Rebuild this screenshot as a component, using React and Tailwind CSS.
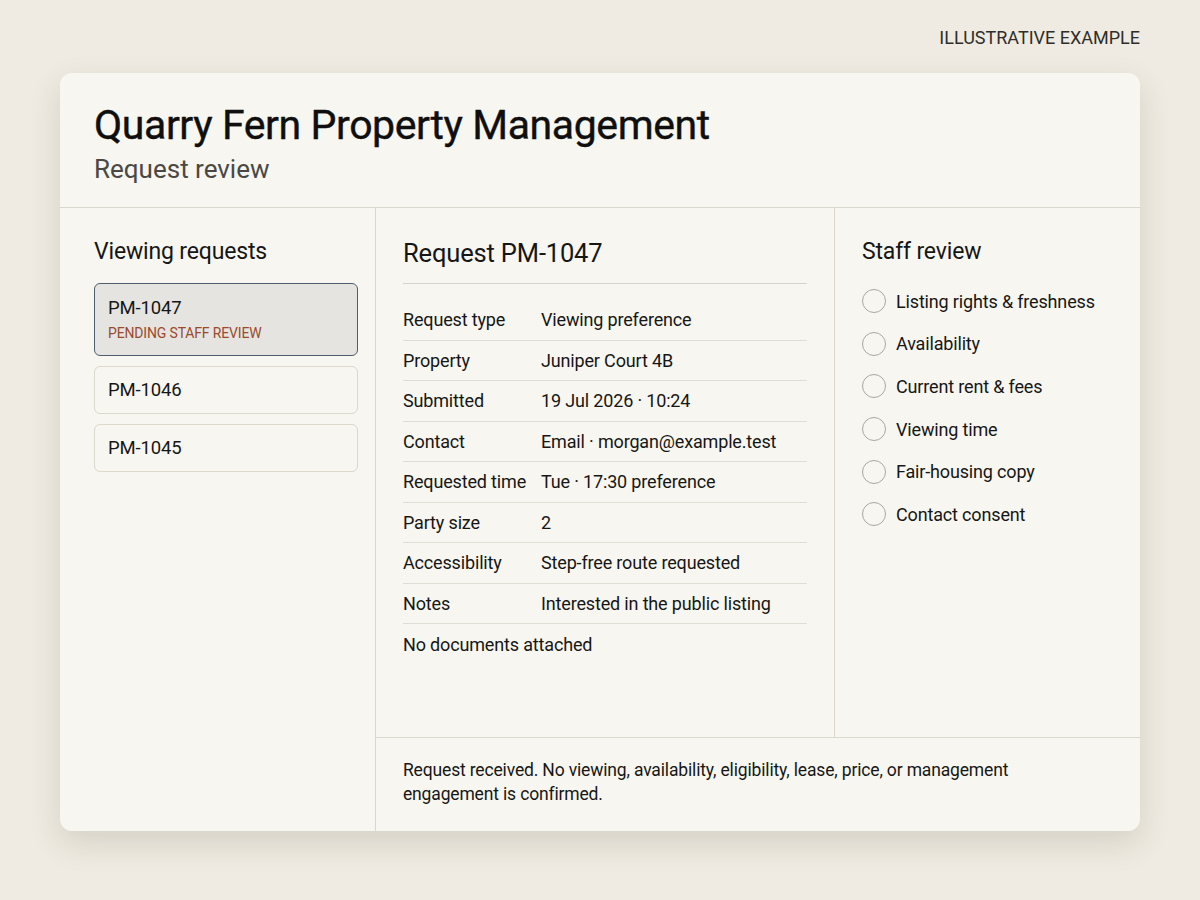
import React from 'react';

const requests = [
  { id: 'PM-1047', status: 'PENDING STAFF REVIEW', active: true },
  { id: 'PM-1046' },
  { id: 'PM-1045' },
];

const details = [
  ['Request type', 'Viewing preference'],
  ['Property', 'Juniper Court 4B'],
  ['Submitted', '19 Jul 2026 · 10:24'],
  ['Contact', 'Email · morgan@example.test'],
  ['Requested time', 'Tue · 17:30 preference'],
  ['Party size', '2'],
  ['Accessibility', 'Step-free route requested'],
  ['Notes', 'Interested in the public listing'],
];

const checks = [
  'Listing rights & freshness',
  'Availability',
  'Current rent & fees',
  'Viewing time',
  'Fair-housing copy',
  'Contact consent',
];

export default function App() {
  return (
    <div
      className="min-h-[900px] w-full bg-[#efebe2] text-[#161616] px-[60px] pt-[25px]"
      style={{ fontFamily: 'Roboto, "Noto Sans", sans-serif' }}
    >
      <div className="flex justify-end h-[24px] items-center">
        <span className="text-[18px] text-[#2e2e2a]">ILLUSTRATIVE EXAMPLE</span>
      </div>

      <div className="mt-[24px] bg-[#f8f6f0] rounded-[12px] shadow-[0_12px_32px_rgba(60,50,30,0.14)] overflow-hidden">
        <header className="px-[34px] pt-[26px] pb-[21px] border-b border-[#dcd7cc]">
          <h1 className="text-[41px] leading-[52px] font-normal tracking-[-0.01em] text-[#0f0f0f] [-webkit-text-stroke:0.4px_#0f0f0f]">
            Quarry Fern Property Management
          </h1>
          <p className="text-[26px] leading-[34px] text-[#4a4844] mt-[1px]">Request review</p>
        </header>

        <div className="grid grid-cols-[316px_459px_1fr] grid-rows-[529px_94px] tracking-[-0.01em]">
          <aside className="row-span-2 border-r border-[#dcd7cc] pl-[34px] pr-[17px] pt-[28px]">
            <h2 className="text-[23px] leading-[32px] mb-[15px]">Viewing requests</h2>
            <div className="flex flex-col gap-[10px]">
              {requests.map((r) =>
                r.active ? (
                  <div
                    key={r.id}
                    className="rounded-[6px] border-[1.5px] border-[#4f5d70] bg-[#e5e4e0] px-[13px] pt-[11px] pb-[12px]"
                  >
                    <div className="text-[18.5px] leading-[26px]">{r.id}</div>
                    <div className="text-[14px] leading-[20px] text-[#9b4a2c] mt-[2px]">{r.status}</div>
                  </div>
                ) : (
                  <div
                    key={r.id}
                    className="rounded-[6px] border border-[#ddd7cc] px-[13px] h-[48px] flex items-center"
                  >
                    <div className="text-[18.5px] leading-[26px]">{r.id}</div>
                  </div>
                )
              )}
            </div>
          </aside>

          <section className="border-r border-[#dcd7cc] px-[27px] pt-[28px]">
            <h2 className="text-[25.5px] leading-[34px] pb-[13px] border-b border-[#d8d3c8]">Request PM-1047</h2>
            <div className="mt-[16px]">
              {details.map(([k, v]) => (
                <div key={k} className="flex border-b border-[#e2ddd3] h-[40.5px] items-center text-[18px]">
                  <span className="w-[138px] shrink-0">{k}</span>
                  <span>{v}</span>
                </div>
              ))}
              <div className="h-[40px] flex items-center text-[18px]">No documents attached</div>
            </div>
          </section>

          <section className="px-[27px] pt-[28px]">
            <h2 className="text-[23px] leading-[32px] mb-[12px]">Staff review</h2>
            <ul className="flex flex-col">
              {checks.map((c) => (
                <li key={c} className="flex items-center gap-[10px] h-[42.6px]">
                  <span className="w-[24px] h-[24px] rounded-full border-[1.5px] border-[#aba79e] shrink-0" />
                  <span className="text-[18px]">{c}</span>
                </li>
              ))}
            </ul>
          </section>

          <footer className="col-span-2 border-t border-[#dcd7cc] px-[27px] pt-[20px]">
            <p className="text-[17.5px] leading-[24px] max-w-[630px]">
              Request received. No viewing, availability, eligibility, lease, price, or management engagement is
              confirmed.
            </p>
          </footer>
        </div>
      </div>
    </div>
  );
}
